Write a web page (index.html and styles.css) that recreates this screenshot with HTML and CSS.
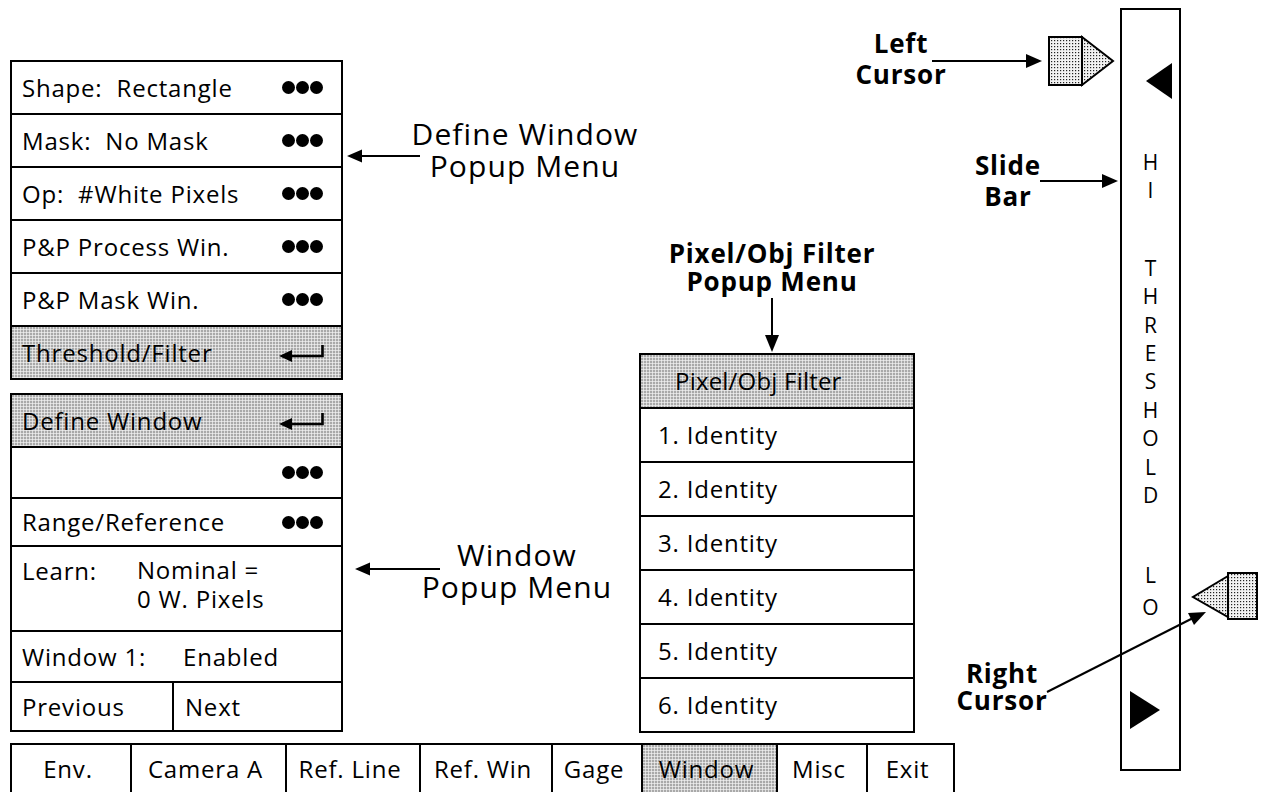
FILE: index.html
```html
<!DOCTYPE html>
<html lang="en">
<head>
    <meta charset="UTF-8">
    <title>Window Setup</title>
    <link rel="stylesheet" href="styles.css">
</head>
<body>
<div class="page">
    <div class="screen">
        <div class="menus">
            <div class="menu define-menu">
                <div class="row"><span>Shape:&nbsp; Rectangle</span><span class="more"><i></i><i></i><i></i></span></div>
                <div class="row"><span>Mask:&nbsp; No Mask</span><span class="more"><i></i><i></i><i></i></span></div>
                <div class="row"><span>Op:&nbsp; #White Pixels</span><span class="more"><i></i><i></i><i></i></span></div>
                <div class="row"><span>P&amp;P Process Win.</span><span class="more"><i></i><i></i><i></i></span></div>
                <div class="row"><span>P&amp;P Mask Win.</span><span class="more"><i></i><i></i><i></i></span></div>
                <div class="row shaded"><span>Threshold/Filter</span>
                    <svg class="ret" viewBox="0 0 46 18" width="46" height="18"><path d="M8 12H43.5V1" fill="none" stroke="#000" stroke-width="2.6"/><polygon points="0,12 13,6 13,18" fill="#000"/></svg>
                </div>
            </div>
            <div class="menu window-menu">
                <div class="row shaded r1"><span>Define Window</span>
                    <svg class="ret" viewBox="0 0 46 18" width="46" height="18"><path d="M8 12H43.5V1" fill="none" stroke="#000" stroke-width="2.6"/><polygon points="0,12 13,6 13,18" fill="#000"/></svg>
                </div>
                <div class="row r2"><span></span><span class="more"><i></i><i></i><i></i></span></div>
                <div class="row r3"><span>Range/Reference</span><span class="more"><i></i><i></i><i></i></span></div>
                <div class="row learn">
                    <span class="lbl">Learn:</span>
                    <span class="lines"><span>Nominal =</span><span>0 W. Pixels</span></span>
                </div>
                <div class="row r5"><span class="lbl-wide">Window 1:</span><span>Enabled</span></div>
                <div class="row split"><span class="half">Previous</span><span class="half next">Next</span></div>
            </div>
        </div>
        <div class="filter-area">
            <div class="filter-title"><div>Pixel/Obj Filter</div><div>Popup Menu</div></div>
            <div class="menu filter-menu">
                <div class="row shaded head">Pixel/Obj Filter</div>
                <div class="row">1. Identity</div>
                <div class="row">2. Identity</div>
                <div class="row">3. Identity</div>
                <div class="row">4. Identity</div>
                <div class="row">5. Identity</div>
                <div class="row">6. Identity</div>
            </div>
        </div>
    </div>

    <div class="tabs">
        <div class="tab">Env.</div>
        <div class="tab">Camera A</div>
        <div class="tab">Ref. Line</div>
        <div class="tab">Ref. Win</div>
        <div class="tab">Gage</div>
        <div class="tab shaded">Window</div>
        <div class="tab">Misc</div>
        <div class="tab">Exit</div>
    </div>

    <!-- threshold slide bar -->
    <div class="slide-bar">
        <svg class="tri-top" viewBox="0 0 26 36" width="26" height="36"><polygon points="0,18 26,0 26,36" fill="#000"/></svg>
        <div class="letters hi"><span>H</span><span>I</span></div>
        <div class="letters word"><span>T</span><span>H</span><span>R</span><span>E</span><span>S</span><span>H</span><span>O</span><span>L</span><span>D</span></div>
        <div class="letters lo"><span>L</span><span>O</span></div>
        <svg class="tri-bottom" viewBox="0 0 30 38" width="30" height="38"><polygon points="0,0 30,19 0,38" fill="#000"/></svg>
    </div>

    <div class="note note-define"><div>Define Window</div><div>Popup Menu</div></div>
    <div class="note note-window"><div>Window</div><div>Popup Menu</div></div>
    <div class="label label-left"><div>Left</div><div>Cursor</div></div>
    <div class="label label-slide"><div>Slide</div><div>Bar</div></div>
    <div class="label label-right"><div>Right</div><div>Cursor</div></div>

    <svg class="overlay" width="1262" height="792" viewBox="0 0 1262 792">
        <defs>
            <pattern id="dots" width="3" height="3" patternUnits="userSpaceOnUse">
                <rect width="3" height="3" fill="#f2f2f2"/>
                <rect x="1" y="1" width="1.2" height="1.2" fill="#222"/>
            </pattern>
        </defs>
        <!-- menu arrows -->
        <line x1="358" y1="156" x2="420" y2="156" stroke="#000" stroke-width="2"/>
        <polygon points="347,156 362,149.5 362,162.5" fill="#000"/>
        <line x1="366" y1="569" x2="440" y2="569" stroke="#000" stroke-width="2"/>
        <polygon points="355,569 370,562.5 370,575.5" fill="#000"/>
        <line x1="772" y1="298" x2="772" y2="338" stroke="#000" stroke-width="2"/>
        <polygon points="772,352 765,335 779,335" fill="#000"/>
        <!-- cursor arrows -->
        <line x1="932" y1="61" x2="1030" y2="61" stroke="#000" stroke-width="2"/>
        <polygon points="1042,61 1026,54 1026,68" fill="#000"/>
        <line x1="1040" y1="181" x2="1106" y2="181" stroke="#000" stroke-width="2"/>
        <polygon points="1118,181 1102,174 1102,188" fill="#000"/>
        <line x1="1047" y1="692" x2="1195" y2="617" stroke="#000" stroke-width="2"/>
        <polygon points="1206,612 1194,625 1188,613" fill="#000"/>
        <!-- left cursor -->
        <rect x="1049" y="37" width="33" height="48" fill="url(#dots)" stroke="#000" stroke-width="2"/>
        <polygon points="1082,37 1113,61 1082,85" fill="url(#dots)" stroke="#000" stroke-width="2"/>
        <!-- right cursor -->
        <rect x="1228" y="573" width="29" height="46" fill="url(#dots)" stroke="#000" stroke-width="2"/>
        <polygon points="1228,576 1193,597 1228,617" fill="url(#dots)" stroke="#000" stroke-width="2"/>
    </svg>
</div>
</body>
</html>
```

FILE: styles.css
```css
*{
    margin:0;padding:0;
    box-sizing: border-box;
}
body{
    background:#fff;
    color:#000;
    font-family: "Open Sans", "Noto Sans", sans-serif;
    font-size: 24px;
    letter-spacing: 0.8px;
}
.page{
    position: relative;
    width:1262px;
    height:792px;
    overflow: hidden;
}
.screen{
    display: flex;
    align-items: flex-start;
    padding: 60px 0 0 10px;
}
.menus{
    width:333px;
    display: flex;
    flex-direction: column;
    gap:13px;
}
.menu{
    border:2px solid #000;
    background:#fff;
}
.row{
    height:51px;
    display: flex;
    align-items: center;
    justify-content: space-between;
    padding:0 18px 0 10px;
    line-height: 32px;
    white-space: nowrap;
}
.row + .row{
    border-top:2px solid #000;
    height:53px;
}
.shaded{
    background-color:#ececec;
    background-image: radial-gradient(circle, #222 0.75px, transparent 1.05px);
    background-size: 3px 3px;
    background-position: -0.5px -0.5px;
}
.more{
    display: flex;
}
.more i{
    width:13px;
    height:13px;
    border-radius: 50%;
    background:#000;
    margin-left:1px;
}
.ret{
    margin-right:-2px;
}
.window-menu .r1{ height:51px; }
.window-menu .r2{ height:51px; }
.window-menu .r3{ height:48px; }
.window-menu .learn{
    height:85px;
    align-items: flex-start;
    justify-content: flex-start;
    padding-top:8px;
}
.lbl{ width:115px; }
.lines{
    display: flex;
    flex-direction: column;
}
.lines span{
    line-height:29px;
}
.window-menu .r5{
    height:51px;
    justify-content: flex-start;
}
.lbl-wide{ width:161px; }
.window-menu .split{
    height:49px;
    padding:0;
    justify-content: flex-start;
    align-items: stretch;
}
.half{
    display: flex;
    align-items: center;
    padding-left:10px;
}
.half:first-child{ width:160px; }
.next{
    flex:1;
    border-left:2px solid #000;
    padding-left:11px;
}

.filter-area{
    margin-left:296px;
    margin-top:179px;
    width:276px;
}
.filter-title{
    font-weight: bold;
    font-size:26px;
    line-height:28px;
    text-align: center;
    width:266px;
    margin-bottom:58px;
}
.filter-menu .row{
    height:52px;
    padding-left:17px;
    justify-content: flex-start;
}
.filter-menu .row + .row{ height:54px; }
.filter-menu .head{
    padding-left:34px;
    letter-spacing: 0.2px;
}

.tabs{
    display: grid;
    grid-template-columns: 120px 155px 134px 132px 90px 135px 90px 89px;
    margin:10px 0 0 10px;
    width:945px;
    height:49px;
    border-top:2px solid #000;
}
.tab{
    border-left:2px solid #000;
    text-align: center;
    padding:8px 6px 0 0;
    line-height:32px;
}
.tab:last-child{
    border-right:2px solid #000;
}

.slide-bar{
    position: absolute;
    left:1120px;
    top:8px;
    width:61px;
    height:763px;
    border:2px solid #000;
    display: flex;
    flex-direction: column;
    align-items: center;
}
.tri-top{
    align-self: flex-end;
    margin:53px 7px 0 0;
}
.letters span{
    display: block;
    text-align: center;
    line-height:28.4px;
    font-size:21px;
    letter-spacing: 0;
}
.hi{ margin-top:49px; }
.word{ margin-top:49px; }
.lo{ margin-top:50px; }
.lo span{ line-height:32px; }
.tri-bottom{
    align-self: flex-start;
    margin:68px 0 0 8px;
}

.note{
    position: absolute;
    font-size:30px;
    line-height:32px;
    letter-spacing: 1.1px;
    text-align: center;
}
.note-define{ left:400px; top:118px; width:250px; }
.note-window{ left:402px; top:539px; width:230px; }
.label{
    position: absolute;
    font-weight: bold;
    font-size:26px;
    line-height:31px;
    text-align: center;
    width:120px;
}
.label-left{ left:841px; top:28px; }
.label-slide{ left:948px; top:150px; }
.label-right{ left:942px; top:660px; line-height:27px; }
.overlay{
    position: absolute;
    left:0;
    top:0;
    pointer-events: none;
}
```
